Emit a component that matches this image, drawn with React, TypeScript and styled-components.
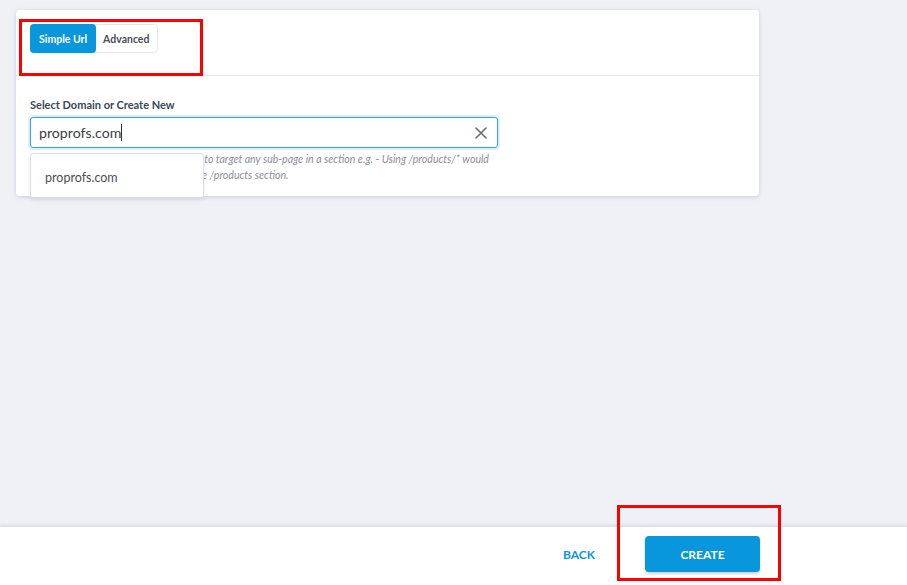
import styled, { createGlobalStyle } from 'styled-components';

const GlobalStyle = createGlobalStyle`
    body {
        margin: 0;
        background: #f0f1f6;
        font-family: Lato, "Noto Sans", sans-serif;
    }
`;

const Page = styled.div`
    position: relative;
    display: flex;
    flex-direction: column;
    height: 585px;
    overflow: hidden;
`;

const Content = styled.div`
    flex: 1;
    padding: 10px 148px 0 16px;
`;

const Card = styled.div`
    background: #fff;
    border-radius: 4px;
    box-shadow: 0 1px 4px rgba(150, 165, 200, 0.45);
`;

const CardHeader = styled.div`
    height: 66px;
    box-sizing: border-box;
    padding: 14px 14px 0;
    border-bottom: 1px solid #e3e6ea;
`;

const TabGroup = styled.div`
    display: inline-flex;
    border: 1px solid #e6e8ec;
    border-radius: 4px;
    height: 29px;
    box-sizing: border-box;
`;

const Tab = styled.button<{ $active?: boolean }>`
    border: none;
    margin: -1px 0 -1px -1px;
    padding: 0 ${(p) => (p.$active ? '9px' : '8px')};
    border-radius: 4px;
    font-family: inherit;
    font-size: 10.5px;
    font-weight: 700;
    background: ${(p) => (p.$active ? '#0896dd' : 'transparent')};
    color: ${(p) => (p.$active ? '#fff' : '#4a4f57')};
    cursor: pointer;
`;

const CardBody = styled.div`
    position: relative;
    padding: 22px 14px 13px;
`;

const Label = styled.div`
    font-size: 11px;
    font-weight: 700;
    color: #3a4756;
    margin-bottom: 6px;
`;

const InputBox = styled.div`
    display: flex;
    align-items: center;
    width: 468px;
    height: 31px;
    box-sizing: border-box;
    border: 1px solid #36a3e3;
    border-radius: 3px;
    box-shadow: 0 0 0 2px rgba(54, 163, 227, 0.18);
    padding: 0 10px 0 8px;
`;

const InputText = styled.span`
    flex: 1;
    font-size: 14.2px;
    color: #3d3f43;
`;

const Caret = styled.span`
    display: inline-block;
    width: 1px;
    height: 17px;
    background: #333;
    vertical-align: -3px;
`;

const ClearButton = styled.span`
    display: flex;
    color: #666b73;
`;

const Helper = styled.p`
    margin: 3px 0 0;
    font-size: 10.6px;
    font-style: italic;
    line-height: 16px;
    color: #8a8f97;
    white-space: nowrap;
`;

const Dropdown = styled.div`
    position: absolute;
    left: 14px;
    top: 77px;
    width: 174px;
    height: 45px;
    box-sizing: border-box;
    background: #fff;
    border: 1px solid #dcdfe3;
    border-radius: 3px;
    box-shadow: 0 2px 4px rgba(0, 0, 0, 0.08);
    display: flex;
    align-items: center;
    padding: 3px 0 0 14px;
    font-size: 12.5px;
    color: #4a4d52;
`;

const Footer = styled.div`
    height: 58px;
    box-sizing: border-box;
    padding: 0 147px 4px 0;
    background: #fff;
    box-shadow: 0 -2px 3px rgba(200, 206, 218, 0.6);
    display: flex;
    align-items: center;
    justify-content: flex-end;
    gap: 50px;
`;

const BackButton = styled.button`
    border: none;
    background: none;
    padding: 0;
    font-family: inherit;
    font-size: 12px;
    font-weight: 700;
    color: #0b96d9;
    cursor: pointer;
`;

const CreateButton = styled.button`
    width: 115px;
    height: 36px;
    border: none;
    border-radius: 4px;
    background: #0896dd;
    color: #fff;
    font-family: inherit;
    font-size: 12px;
    font-weight: 700;
    box-shadow: 0 2px 3px rgba(0, 0, 0, 0.18);
    cursor: pointer;
`;

const Highlight = styled.div<{ $x: number; $y: number; $w: number; $h: number }>`
    position: absolute;
    left: ${(p) => p.$x}px;
    top: ${(p) => p.$y}px;
    width: ${(p) => p.$w}px;
    height: ${(p) => p.$h}px;
    box-sizing: border-box;
    border: 3px solid #f00;
    pointer-events: none;
`;

function CloseIcon() {
    return (
        <svg width="12" height="12" viewBox="0 0 12 12" fill="none" stroke="currentColor" strokeWidth="1.6" strokeLinecap="round">
            <path d="M1 1L11 11M11 1L1 11" />
        </svg>
    );
}

export default function App() {
    return (
        <>
            <GlobalStyle />
            <Page>
                <Content>
                    <Card>
                        <CardHeader>
                            <TabGroup>
                                <Tab $active>Simple Url</Tab>
                                <Tab>Advanced</Tab>
                            </TabGroup>
                        </CardHeader>
                        <CardBody>
                            <Label>Select Domain or Create New</Label>
                            <InputBox>
                                <InputText>
                                    proprofs.com
                                    <Caret />
                                </InputText>
                                <ClearButton>
                                    <CloseIcon />
                                </ClearButton>
                            </InputBox>
                            <Helper>
                                Use a wildcard (*) at the end of the URL to target any sub-page in a section e.g. - Using /products/* would
                                <br />
                                target all the pages and sub-pages in the /products section.
                            </Helper>
                            <Dropdown>proprofs.com</Dropdown>
                        </CardBody>
                    </Card>
                </Content>
                <Footer>
                    <BackButton>BACK</BackButton>
                    <CreateButton>CREATE</CreateButton>
                </Footer>
                <Highlight $x={19} $y={19} $w={184} $h={57} />
                <Highlight $x={617} $y={505} $w={164} $h={76} />
            </Page>
        </>
    );
}
